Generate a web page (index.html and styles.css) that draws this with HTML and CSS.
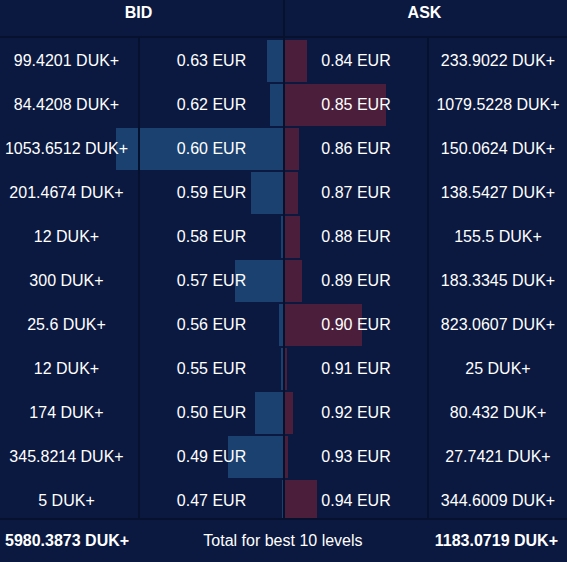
FILE: index.html
```html
<!DOCTYPE html>
<html>
<head>
<meta charset="utf-8">
<link rel="stylesheet" href="styles.css">
</head>
<body>
<div class="book">
  <div class="head">
    <div class="hcell bid">BID</div>
    <div class="hcell ask">ASK</div>
  </div>
  <div class="rows">
    <div class="row"><span class="bar bbar" style="width:16px"></span><span class="bar abar" style="width:22px"></span><div class="c c1">99.4201 DUK+</div><div class="c">0.63 EUR</div><div class="c">0.84 EUR</div><div class="c">233.9022 DUK+</div></div>
    <div class="row"><span class="bar bbar" style="width:13px"></span><span class="bar abar" style="width:101px"></span><div class="c c1">84.4208 DUK+</div><div class="c">0.62 EUR</div><div class="c">0.85 EUR</div><div class="c">1079.5228 DUK+</div></div>
    <div class="row"><span class="bar bbar" style="width:167px"></span><span class="bar abar" style="width:14px"></span><div class="c c1">1053.6512 DUK+</div><div class="c">0.60 EUR</div><div class="c">0.86 EUR</div><div class="c">150.0624 DUK+</div></div>
    <div class="row"><span class="bar bbar" style="width:32px"></span><span class="bar abar" style="width:13px"></span><div class="c c1">201.4674 DUK+</div><div class="c">0.59 EUR</div><div class="c">0.87 EUR</div><div class="c">138.5427 DUK+</div></div>
    <div class="row"><span class="bar bbar" style="width:2px"></span><span class="bar abar" style="width:15px"></span><div class="c c1">12 DUK+</div><div class="c">0.58 EUR</div><div class="c">0.88 EUR</div><div class="c">155.5 DUK+</div></div>
    <div class="row"><span class="bar bbar" style="width:48px"></span><span class="bar abar" style="width:17px"></span><div class="c c1">300 DUK+</div><div class="c">0.57 EUR</div><div class="c">0.89 EUR</div><div class="c">183.3345 DUK+</div></div>
    <div class="row"><span class="bar bbar" style="width:4px"></span><span class="bar abar" style="width:77px"></span><div class="c c1">25.6 DUK+</div><div class="c">0.56 EUR</div><div class="c">0.90 EUR</div><div class="c">823.0607 DUK+</div></div>
    <div class="row"><span class="bar bbar" style="width:2px"></span><span class="bar abar" style="width:2px"></span><div class="c c1">12 DUK+</div><div class="c">0.55 EUR</div><div class="c">0.91 EUR</div><div class="c">25 DUK+</div></div>
    <div class="row"><span class="bar bbar" style="width:28px"></span><span class="bar abar" style="width:8px"></span><div class="c c1">174 DUK+</div><div class="c">0.50 EUR</div><div class="c">0.92 EUR</div><div class="c">80.432 DUK+</div></div>
    <div class="row"><span class="bar bbar" style="width:55px"></span><span class="bar abar" style="width:3px"></span><div class="c c1">345.8214 DUK+</div><div class="c">0.49 EUR</div><div class="c">0.93 EUR</div><div class="c">27.7421 DUK+</div></div>
    <div class="row"><span class="bar bbar" style="width:1px"></span><span class="bar abar" style="width:32px"></span><div class="c c1">5 DUK+</div><div class="c">0.47 EUR</div><div class="c">0.94 EUR</div><div class="c">344.6009 DUK+</div></div>
  </div>
  <div class="foot">
    <div class="ftot">5980.3873 DUK+</div>
    <div class="flabel">Total for best 10 levels</div>
    <div class="ftot">1183.0719 DUK+</div>
  </div>
</div>
</body>
</html>
```
FILE: styles.css
```css
html, body {
  margin: 0;
  padding: 0;
  background: #0b1940;
}
.book {
  width: 567px;
  height: 562px;
  display: flex;
  flex-direction: column;
  font-family: "Liberation Sans", Arial, sans-serif;
  font-size: 16px;
  color: #ffffff;
  background: #0b1940;
}
.head {
  display: grid;
  grid-template-columns: 283px 282px;
  column-gap: 2px;
  height: 36px;
  background: #06112e;
  border-bottom: 2px solid #06112e;
}
.hcell {
  background: #0b1940;
  font-weight: bold;
  text-align: center;
  padding-top: 4px;
  line-height: 18px;
}
.hcell.bid { padding-right: 6px; }
.hcell.ask { padding-right: 3px; }
.rows {
  height: 480px;
  overflow: hidden;
}
.row {
  position: relative;
  height: 44px;
  display: grid;
  grid-template-columns: 138px 145px 144px 140px;
}
.c {
  position: relative;
  z-index: 2;
  text-align: center;
  line-height: 44px;
  padding-top: 1px;
  white-space: nowrap;
  border-left: 2px solid #06112e;
}
.c.c1 {
  border-left: none;
  padding-right: 5px;
}
.bar {
  position: absolute;
  z-index: 1;
  top: 2px;
  bottom: 0;
}
.bbar {
  right: 284px;
  background: #1a416f;
}
.abar {
  left: 285px;
  background: #4b1f3b;
}
.foot {
  flex: 1;
  border-top: 2px solid #06112e;
  display: flex;
  align-items: center;
  justify-content: space-between;
  padding: 0 9px 0 5px;
}
.ftot {
  font-weight: bold;
}
.flabel {
  padding-left: 2px;
}
```
